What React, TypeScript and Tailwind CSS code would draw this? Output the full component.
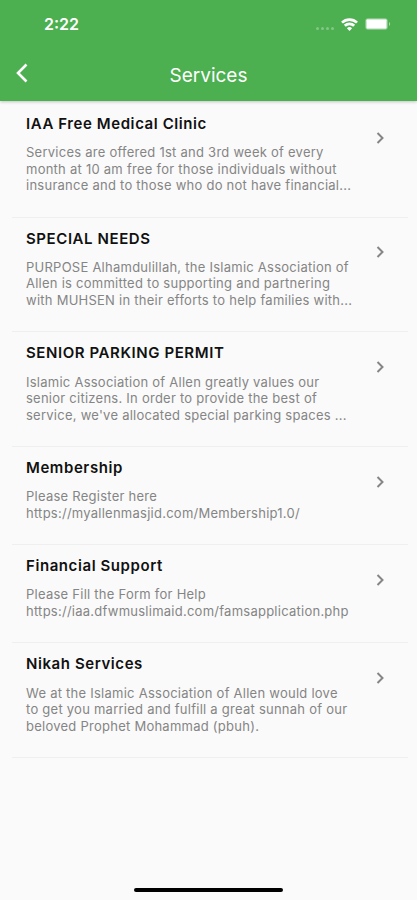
interface Service {
  title: string;
  lines: string[];
}

const services: Service[] = [
  {
    title: "IAA Free Medical Clinic",
    lines: [
      "Services are offered 1st and 3rd week of every",
      "month at 10 am free for those individuals without",
      "insurance and to those who do not have financial...",
    ],
  },
  {
    title: "SPECIAL NEEDS",
    lines: [
      "PURPOSE Alhamdulillah, the Islamic Association of",
      "Allen is committed to supporting and partnering",
      "with MUHSEN in their efforts to help families with...",
    ],
  },
  {
    title: "SENIOR PARKING PERMIT",
    lines: [
      "Islamic Association of Allen greatly values our",
      "senior citizens. In order to provide the best of",
      "service, we've allocated special parking spaces ...",
    ],
  },
  {
    title: "Membership",
    lines: ["Please Register here", "https://myallenmasjid.com/Membership1.0/"],
  },
  {
    title: "Financial Support",
    lines: ["Please Fill the Form for Help", "https://iaa.dfwmuslimaid.com/famsapplication.php"],
  },
  {
    title: "Nikah Services",
    lines: [
      "We at the Islamic Association of Allen would love",
      "to get you married and fulfill a great sunnah of our",
      "beloved Prophet Mohammad (pbuh).",
    ],
  },
];

function StatusBar() {
  return (
    <div className="flex h-12 items-center justify-between pr-[26px] pl-11">
      <span className="text-[16px] font-semibold">2:22</span>
      <div className="flex items-center gap-[7px]">
        <div className="flex gap-[2px] pt-2 opacity-30">
          <i className="size-[3px] rounded-full bg-white" />
          <i className="size-[3px] rounded-full bg-white" />
          <i className="size-[3px] rounded-full bg-white" />
          <i className="size-[3px] rounded-full bg-white" />
        </div>
        <svg width="17" height="13" viewBox="0 0 17 13" fill="none" stroke="white" strokeWidth="2.7">
          <path d="M1 4.6a10.8 10.8 0 0 1 15 0M3.8 7.8a6.7 6.7 0 0 1 9.4 0" />
          <path d="M8.5 13 5.9 10.3a3.8 3.8 0 0 1 5.2 0Z" fill="white" stroke="none" />
        </svg>
        <svg width="26" height="12" viewBox="0 0 26 12" fill="none">
          <rect x=".5" y=".5" width="22" height="11" rx="2.5" stroke="white" strokeOpacity=".3" />
          <rect x="1.3" y="1.3" width="20.4" height="9.4" rx="1" fill="white" />
          <path d="M24 4v4c1.6-.7 1.6-3.3 0-4Z" fill="white" fillOpacity=".5" />
        </svg>
      </div>
    </div>
  );
}

function ServiceRow({ title, lines }: Service) {
  return (
    <li className="mr-[9px] ml-3 flex justify-between border-b border-[#efefef] pt-[10.9px] pr-[23px] pb-[23px] pl-[14px]">
      <div>
        <h2 className="text-[15px] leading-5 font-semibold tracking-[0.58px] text-[#111]">{title}</h2>
        <p className="mt-[10.3px] text-[13px] leading-[16.5px] tracking-[0.25px] whitespace-nowrap text-[#858585]">
          {lines.map((line) => (
            <span key={line} className="block">
              {line}
            </span>
          ))}
        </p>
      </div>
      <svg className="mt-[17.8px] shrink-0" width="9" height="12" viewBox="0 0 9 12" fill="none" stroke="#858585" strokeWidth="2">
        <path d="m1.5 1 5 5-5 5" />
      </svg>
    </li>
  );
}

export default function App() {
  return (
    <div className="flex h-[900px] w-[417px] flex-col bg-[#fafafa] font-['Inter','Liberation_Sans',sans-serif]">
      <header className="h-[101px] bg-[#4caf50] text-white shadow-[0_1px_3px_rgba(0,0,0,0.22)]">
        <StatusBar />
        <div className="grid h-[54px] grid-cols-[48px_1fr_48px] items-center">
          <button aria-label="Back" className="-mt-1 pl-4">
            <svg width="12" height="20" viewBox="0 0 12 20" fill="none" stroke="white" strokeWidth="2.6">
              <path d="m10.5 1.5-8.5 8.5 8.5 8.5" />
            </svg>
          </button>
          <h1 className="pt-[3px] text-center text-[19px]">Services</h1>
        </div>
      </header>

      <ul className="flex-1 pt-[2px]">
        {services.map((service) => (
          <ServiceRow key={service.title} {...service} />
        ))}
      </ul>

      <div className="mx-auto mb-2 h-1 w-[149px] rounded-full bg-black" />
    </div>
  );
}
